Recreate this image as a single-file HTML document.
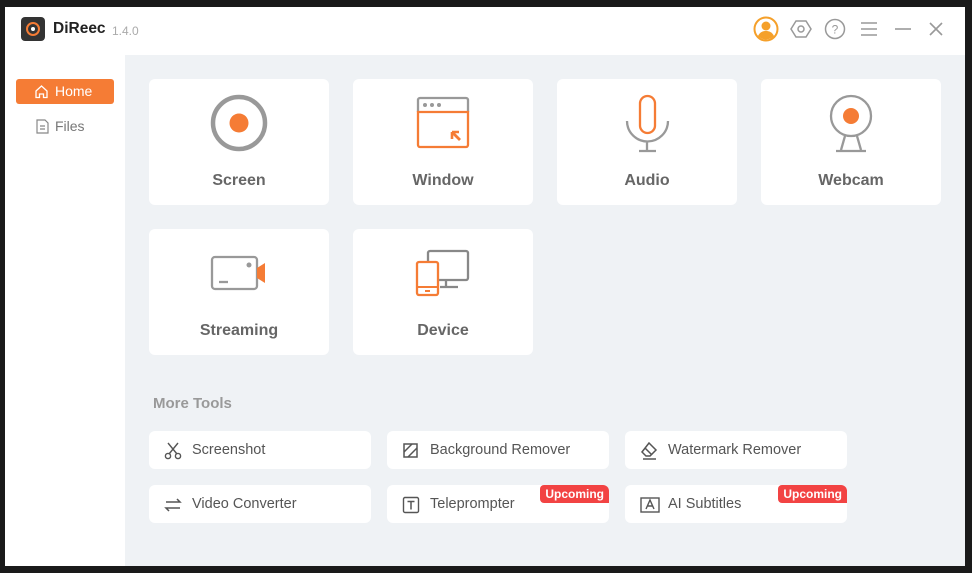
<!DOCTYPE html>
<html><head><meta charset="utf-8"><style>
*{margin:0;padding:0;box-sizing:border-box}
body{width:972px;height:573px;background:#1a1a1a;font-family:"Liberation Sans",sans-serif;position:relative;overflow:hidden}
.win{position:absolute;left:5px;top:7px;width:960px;height:559px;background:#fff}
.content{position:absolute;left:125px;top:55px;width:840px;height:511px;background:#eff2f5}
.card{position:absolute;width:180px;height:126px;background:#fff;border-radius:6px;text-align:center}
.card svg{position:absolute;left:60px;top:14px}
.card .t{position:absolute;left:0;right:0;top:93px;font-size:16px;font-weight:bold;color:#666}
.tool{position:absolute;width:222px;height:38px;background:#fff;border-radius:6px;font-size:14.5px;color:#555}
.tool svg{position:absolute;left:15px;top:11px}
.tool span.l{position:absolute;left:43px;top:11px}
.up{position:absolute;right:0;top:0;background:#f24343;color:#fff;font-size:12px;font-weight:bold;padding:2px 5px;border-radius:4px 6px 0 4px}
.abs{position:absolute}
</style></head><body>
<div class="win">
 <div class="abs" style="left:16px;top:10px;width:24px;height:24px;background:#333;border-radius:4px"></div>
 <div class="abs" style="left:21px;top:15px;width:14px;height:14px;border:2.5px solid #f57c35;border-radius:50%;background:#333"></div>
 <div class="abs" style="left:26px;top:20px;width:4px;height:4px;background:#fff;border-radius:50%"></div>
 <div class="abs" style="left:48px;top:13px;font-size:15.5px;font-weight:bold;color:#222">DiReec</div>
 <div class="abs" style="left:107px;top:17px;font-size:12px;color:#aaa">1.4.0</div>
 <svg class="abs" style="left:748px;top:9px" width="26" height="26" viewBox="0 0 26 26"><circle cx="13" cy="13" r="11.5" fill="#fff" stroke="#f5a02a" stroke-width="2"/><circle cx="13" cy="10" r="4.5" fill="#f5a02a"/><path d="M5 20c2-4 5-5 8-5s6 1 8 5a11 11 0 0 1-16 0z" fill="#f5a02a"/></svg>
 <svg class="abs" style="left:785px;top:12px" width="22" height="20" viewBox="0 0 22 20"><path d="M6 2h10l5 8-5 8H6L1 10z" fill="none" stroke="#999" stroke-width="1.5"/><circle cx="11" cy="10" r="3" fill="none" stroke="#999" stroke-width="1.5"/></svg>
 <svg class="abs" style="left:819px;top:11px" width="22" height="22" viewBox="0 0 22 22"><circle cx="11" cy="11" r="9.5" fill="none" stroke="#999" stroke-width="1.5"/><text x="11" y="15.5" font-size="12" text-anchor="middle" fill="#999" font-family="Liberation Sans">?</text></svg>
 <svg class="abs" style="left:855px;top:14px" width="18" height="16"><path d="M1 2h16M1 8h16M1 14h16" stroke="#999" stroke-width="1.6"/></svg>
 <svg class="abs" style="left:889px;top:14px" width="18" height="16"><path d="M1 8h16" stroke="#999" stroke-width="1.6"/></svg>
 <svg class="abs" style="left:923px;top:14px" width="16" height="16"><path d="M2 2l12 12M14 2L2 14" stroke="#999" stroke-width="1.6"/></svg>
 <div class="abs" style="left:11px;top:72px;width:98px;height:25px;background:#f57c35;border-radius:3px;color:#fff;font-size:14px">
  <svg class="abs" style="left:18px;top:5px" width="15" height="15" viewBox="0 0 15 15"><path d="M2 7L7.5 2 13 7v6.5H9.5V10h-4v3.5H2z" fill="none" stroke="#fff" stroke-width="1.3"/></svg>
  <span class="abs" style="left:39px;top:4px">Home</span></div>
 <svg class="abs" style="left:31px;top:112px" width="13" height="15" viewBox="0 0 13 15"><path d="M1 1h8l3 3v10H1z" fill="none" stroke="#888" stroke-width="1.2"/><path d="M4 7h5M4 10h5" stroke="#888" stroke-width="1.2"/></svg>
 <div class="abs" style="left:50px;top:111px;font-size:14px;color:#777">Files</div>
</div>
<div class="content"></div>

<div class="card" style="left:149px;top:79px"><svg width="60" height="60" viewBox="0 0 60 60"><circle cx="30" cy="30" r="26" fill="none" stroke="#999" stroke-width="4.5"/><circle cx="30" cy="30" r="9.5" fill="#f57c35"/></svg><div class="t">Screen</div></div>
<div class="card" style="left:353px;top:79px"><svg width="60" height="60" viewBox="0 0 60 60"><path d="M5 19V7a2 2 0 0 1 2-2h46a2 2 0 0 1 2 2v12" fill="none" stroke="#999" stroke-width="2.3"/><circle cx="12" cy="12" r="2" fill="#999"/><circle cx="19" cy="12" r="2" fill="#999"/><circle cx="26" cy="12" r="2" fill="#999"/><path d="M5 19h50v33a2 2 0 0 1-2 2H7a2 2 0 0 1-2-2z" fill="none" stroke="#f57c35" stroke-width="2.3"/><path d="M39 39h7M39 39v7" stroke="#f57c35" stroke-width="2.6" fill="none"/><path d="M39 39l8 8" stroke="#f57c35" stroke-width="2.8"/></svg><div class="t">Window</div></div>
<div class="card" style="left:557px;top:79px"><svg width="60" height="60" viewBox="0 0 60 60"><rect x="23" y="3" width="15" height="37" rx="7.5" fill="none" stroke="#f57c35" stroke-width="2.3"/><path d="M10 28a20 20 0 0 0 41 0M30 48v9M22 58h17" fill="none" stroke="#999" stroke-width="2.3"/></svg><div class="t">Audio</div></div>
<div class="card" style="left:761px;top:79px"><svg width="60" height="60" viewBox="0 0 60 60"><circle cx="30" cy="23" r="20" fill="none" stroke="#999" stroke-width="2.3"/><circle cx="30" cy="23" r="8" fill="#f57c35"/><path d="M24 43l-4 14M36 43l4 14M15 58h30" stroke="#999" stroke-width="2.3" fill="none"/></svg><div class="t">Webcam</div></div>
<div class="card" style="left:149px;top:229px"><svg width="60" height="60" viewBox="0 0 60 60"><rect x="3" y="14" width="45" height="32" rx="3" fill="none" stroke="#999" stroke-width="2.3"/><circle cx="40" cy="22" r="2.5" fill="#999"/><path d="M10 39h9" stroke="#999" stroke-width="2.3"/><path d="M48 25l8-5v20l-8-5z" fill="#f57c35"/></svg><div class="t">Streaming</div></div>
<div class="card" style="left:353px;top:229px"><svg width="60" height="60" viewBox="0 0 60 60"><rect x="15" y="8" width="40" height="29" rx="2" fill="none" stroke="#888" stroke-width="2.3"/><path d="M33 37v7M27 44h18" stroke="#888" stroke-width="2.3"/><rect x="4" y="19" width="21" height="33" rx="2" fill="#fff" stroke="#f57c35" stroke-width="2.3"/><path d="M5 44h19M12 48h5" stroke="#f57c35" stroke-width="2"/></svg><div class="t">Device</div></div>

<div class="abs" style="left:153px;top:395px;font-size:15px;font-weight:bold;color:#999">More Tools</div>

<div class="tool" style="left:149px;top:431px"><svg width="18" height="18" viewBox="0 0 18 18"><path d="M4 1l9 11M14 1L5 12" stroke="#555" stroke-width="1.4" fill="none"/><circle cx="4" cy="14" r="2.6" fill="none" stroke="#555" stroke-width="1.4"/><circle cx="14" cy="14" r="2.6" fill="none" stroke="#555" stroke-width="1.4"/></svg><span class="l">Screenshot</span></div>
<div class="tool" style="left:387px;top:431px"><svg width="18" height="18" viewBox="0 0 18 18"><rect x="2" y="2" width="13" height="13" fill="none" stroke="#555" stroke-width="1.5"/><path d="M2 10l8-8M6 15l9-9" stroke="#555" stroke-width="1.5"/></svg><span class="l">Background Remover</span></div>
<div class="tool" style="left:625px;top:431px"><svg width="18" height="18" viewBox="0 0 18 18"><path d="M9 1l7 7-6 6H6L2 10z" fill="none" stroke="#555" stroke-width="1.5"/><path d="M5 6l7 7M3 17h13" stroke="#555" stroke-width="1.5"/></svg><span class="l">Watermark Remover</span></div>
<div class="tool" style="left:149px;top:485px"><svg width="18" height="18" viewBox="0 0 18 18"><path d="M2 6h14l-3-3M16 12H2l3 3" stroke="#555" stroke-width="1.5" fill="none"/></svg><span class="l">Video Converter</span></div>
<div class="tool" style="left:387px;top:485px"><svg width="18" height="18" viewBox="0 0 18 18"><rect x="1.5" y="1.5" width="15" height="15" rx="1.5" fill="none" stroke="#555" stroke-width="1.4"/><path d="M5.5 5.5h7M9 5.5v8" stroke="#555" stroke-width="1.5"/></svg><span class="l">Teleprompter</span><span class="up">Upcoming</span></div>
<div class="tool" style="left:625px;top:485px"><svg width="20" height="18" viewBox="0 0 20 18"><rect x="1" y="2" width="18" height="14" fill="none" stroke="#555" stroke-width="1.4"/><path d="M6 13l4-9 4 9M7.5 10h5" stroke="#555" stroke-width="1.4" fill="none"/></svg><span class="l">AI Subtitles</span><span class="up">Upcoming</span></div>
</body></html>
